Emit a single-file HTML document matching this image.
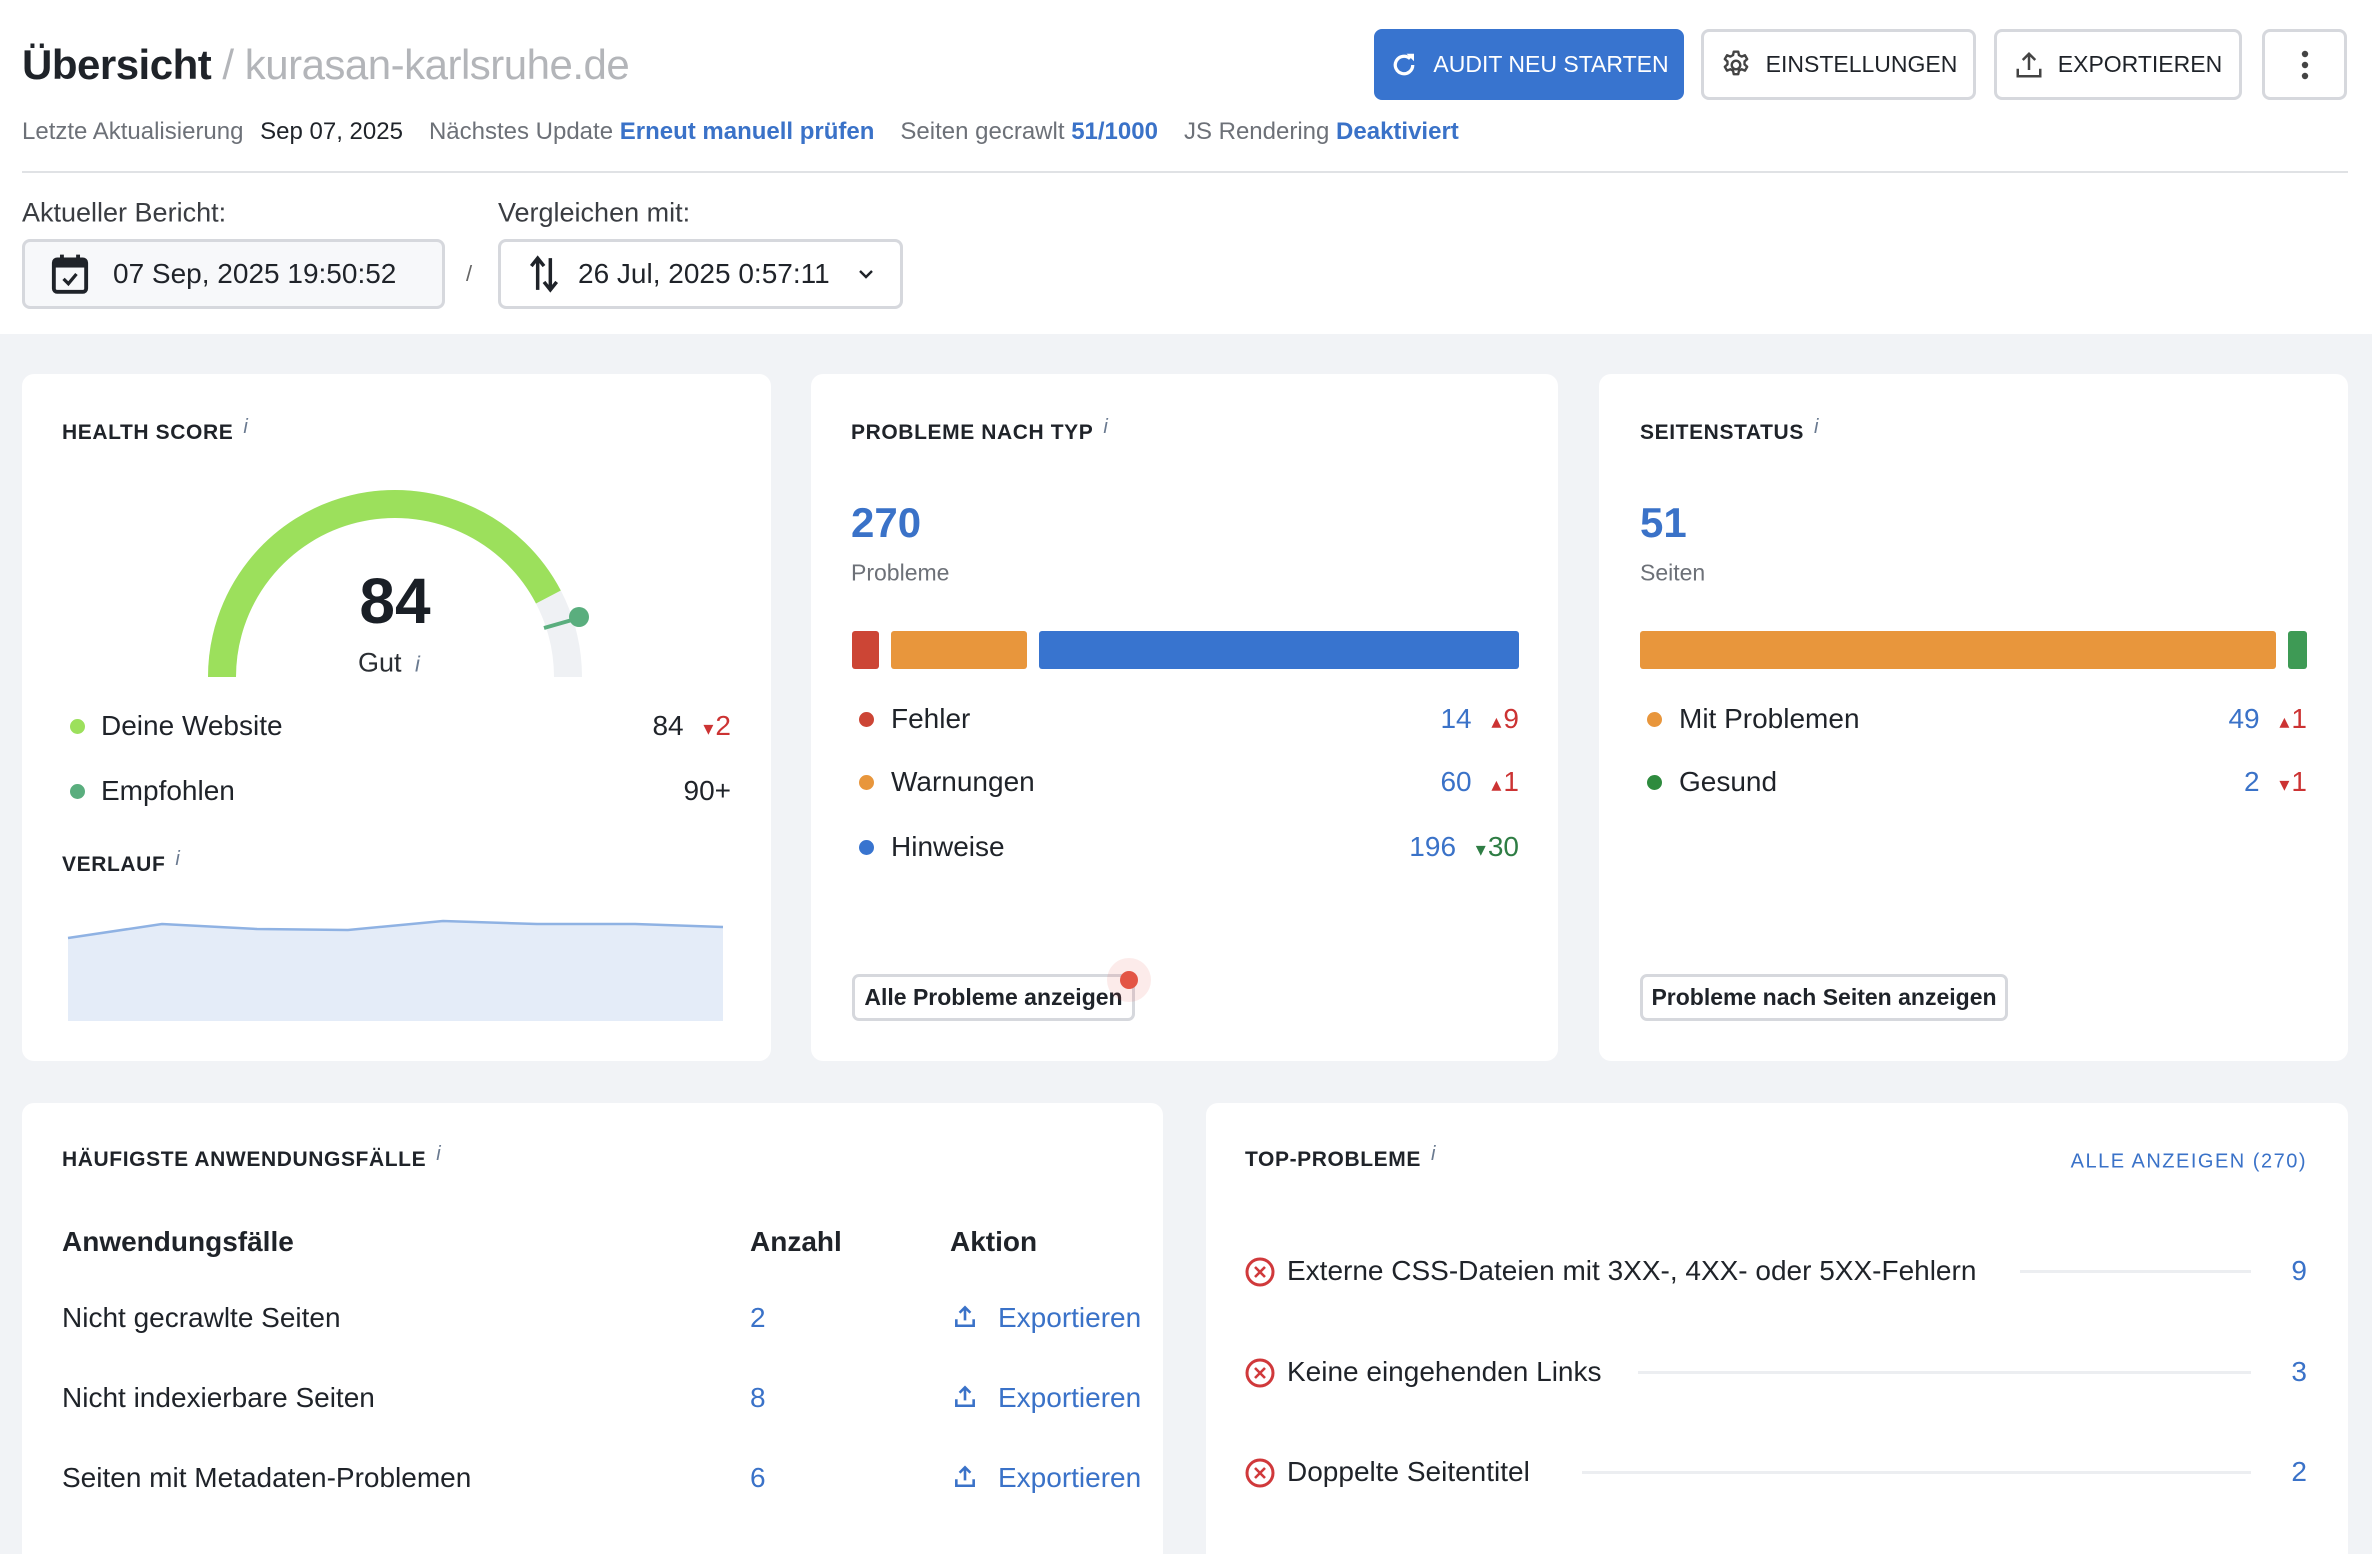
<!DOCTYPE html>
<html><head><meta charset="utf-8">
<style>
*{box-sizing:border-box;margin:0;padding:0}
html,body{width:2372px;height:1554px;overflow:hidden}
body{background:#fff;font-family:"Liberation Sans",sans-serif;color:#1f2329;position:relative}
.a{position:absolute;white-space:nowrap}
.vc{transform:translateY(-50%)}
.gray{background:#f1f3f6;position:absolute;left:0;top:334px;width:2372px;height:1220px}
.card{position:absolute;background:#fff;border-radius:12px}
.ttl{font-size:21px;font-weight:bold;letter-spacing:0.6px;color:#1f2329}
.ttl i{font-weight:normal;color:#6a7a90;margin-left:10px;font-size:20px;position:relative;top:-6px}
.btn{position:absolute;border:3px solid #d6d8dd;border-radius:8px;background:#fff;display:flex;align-items:center;justify-content:center;font-size:23px;color:#1f2329}
.blue{color:#3a72c8}
.dot{position:absolute;width:15px;height:15px;border-radius:50%}
.row{font-size:28px}
.ar{font-size:20px;margin-left:12px;margin-right:2px}
.sbtn{position:absolute;border:3px solid #d6d8dd;border-radius:7px;background:#fff;font-size:23px;font-weight:bold;color:#1f2329;display:flex;align-items:center;justify-content:center}
</style></head><body>

<div class="a vc" style="left:22px;top:65px;font-size:42px;font-weight:bold;letter-spacing:-0.5px">Übersicht<span style="font-weight:normal;color:#b3b5b9"> / kurasan-karlsruhe.de</span></div>
<div class="a vc" style="left:22px;top:132px;font-size:24px;color:#6d7178">Letzte Aktualisierung <span style="color:#1f2329;margin-left:10px;margin-right:26px">Sep 07, 2025</span>Nächstes Update <span class="blue" style="font-weight:bold;margin-right:26px">Erneut manuell prüfen</span>Seiten gecrawlt <span class="blue" style="font-weight:bold;margin-right:26px">51/1000</span>JS Rendering <span class="blue" style="font-weight:bold">Deaktiviert</span></div>

<div class="btn" style="left:1374px;top:29px;width:310px;height:71px;background:#3874cf;border-color:#3874cf;color:#fff">
<svg width="30" height="30" viewBox="0 0 24 24" style="margin-right:14px"><path d="M19 12a7 7 0 1 1-2.1-5" fill="none" stroke="#fff" stroke-width="2.6"/><path d="M14 3h6v6z" fill="#fff"/></svg>AUDIT NEU STARTEN</div>
<div class="btn" style="left:1701px;top:29px;width:275px;height:71px">
<svg width="32" height="32" viewBox="0 0 24 24" style="margin-right:14px"><circle cx="12" cy="12" r="3.2" fill="none" stroke="#444" stroke-width="1.8"/><path d="M10.3 2h3.4l.5 2.6 2 1.1 2.5-1 1.7 2.9-2 1.7v2.3l2 1.7-1.7 2.9-2.5-1-2 1.1-.5 2.6h-3.4l-.5-2.6-2-1.1-2.5 1-1.7-2.9 2-1.7V9.3l-2-1.7 1.7-2.9 2.5 1 2-1.1z" fill="none" stroke="#444" stroke-width="1.8" stroke-linejoin="round"/></svg>EINSTELLUNGEN</div>
<div class="btn" style="left:1994px;top:29px;width:248px;height:71px">
<svg width="30" height="30" viewBox="0 0 24 24" style="margin-right:14px"><path d="M12 16V3M7 8l5-5 5 5M3 15v6h18v-6" fill="none" stroke="#444" stroke-width="2"/></svg>EXPORTIEREN</div>
<div class="btn" style="left:2262px;top:29px;width:85px;height:71px">
<svg width="10" height="30" viewBox="0 0 10 30"><circle cx="5" cy="4" r="3.2" fill="#444"/><circle cx="5" cy="15" r="3.2" fill="#444"/><circle cx="5" cy="26" r="3.2" fill="#444"/></svg></div>

<div class="a" style="left:22px;top:171px;width:2326px;height:2px;background:#e0e2e5"></div>

<div class="a vc" style="left:22px;top:213px;font-size:27px;color:#3a3d42">Aktueller Bericht:</div>
<div class="a vc" style="left:498px;top:213px;font-size:27px;color:#3a3d42">Vergleichen mit:</div>
<div class="a" style="left:22px;top:239px;width:423px;height:70px;border:3px solid #d6d8dd;border-radius:8px;background:#f7f8fa"></div>
<svg class="a" style="left:50px;top:253px" width="40" height="42" viewBox="0 0 24 26"><rect x="2" y="4" width="20" height="20" rx="2" fill="none" stroke="#1f2329" stroke-width="2.4"/><rect x="2" y="4" width="20" height="5" fill="#1f2329"/><path d="M7 1v5M17 1v5" stroke="#1f2329" stroke-width="2.4"/><path d="M8 16l3 3 5-6" fill="none" stroke="#1f2329" stroke-width="2"/></svg>
<div class="a vc" style="left:113px;top:274px;font-size:28px">07 Sep, 2025 19:50:52</div>
<div class="a vc" style="left:466px;top:274px;font-size:22px;color:#666">/</div>
<div class="a" style="left:498px;top:239px;width:405px;height:70px;border:3px solid #d6d8dd;border-radius:8px;background:#fff"></div>
<svg class="a" style="left:528px;top:255px" width="32" height="38" viewBox="0 0 20 24"><path d="M6 22V3M2 7l4-5 4 5M14 2v19M10 17l4 5 4-5" fill="none" stroke="#1f2329" stroke-width="2.2"/></svg>
<div class="a vc" style="left:578px;top:274px;font-size:28px">26 Jul, 2025 0:57:11</div>
<svg class="a" style="left:857px;top:267px" width="18" height="14" viewBox="0 0 18 14"><path d="M3 4l6 6 6-6" fill="none" stroke="#1f2329" stroke-width="2.4"/></svg>

<div class="gray"></div>

<!-- Card 1 -->
<div class="card" style="left:22px;top:374px;width:749px;height:687px"></div>
<div class="a vc ttl" style="left:62px;top:433px">HEALTH SCORE<i>i</i></div>
<svg class="a" style="left:195px;top:480px" width="400" height="200" viewBox="0 0 400 200">
<path d="M27 197 A173 173 0 0 1 373 197" fill="none" stroke="#eff1f4" stroke-width="28"/>
<path d="M27 197 A173 173 0 0 1 353.4 117" fill="none" stroke="#9ce05c" stroke-width="28"/>
<path d="M349 148 L384 138" stroke="#5aae7e" stroke-width="4"/>
<circle cx="384" cy="137" r="10" fill="#5aae7e"/>
</svg>
<div class="a" style="left:295px;top:601px;width:200px;text-align:center;transform:translateY(-50%);font-size:64px;font-weight:bold;color:#1a1f26">84</div>
<div class="a vc" style="left:358px;top:663px;font-size:27px;color:#2a2e33">Gut <i style="color:#6a7a90;font-size:22px;margin-left:6px">i</i></div>
<div class="dot" style="left:70px;top:719px;background:#9ce05c"></div>
<div class="a vc row" style="left:101px;top:726px">Deine Website</div>
<div class="a vc row" style="right:1641px;top:726px">84 <span class="ar" style="color:#cc3333">▾</span><span style="color:#cc3333">2</span></div>
<div class="dot" style="left:70px;top:784px;background:#5aae7e"></div>
<div class="a vc row" style="left:101px;top:791px">Empfohlen</div>
<div class="a vc row" style="right:1641px;top:791px">90+</div>
<div class="a vc ttl" style="left:62px;top:865px">VERLAUF<i>i</i></div>
<svg class="a" style="left:0;top:0" width="800" height="1100"><path d="M68 938 L162 924 L257 929 L348 930 L443 921 L537 924 L635 924 L723 927 L723 1021 L68 1021Z" fill="#e4ecf8"/><path d="M68 938 L162 924 L257 929 L348 930 L443 921 L537 924 L635 924 L723 927" fill="none" stroke="#8fb2e3" stroke-width="2.5"/></svg>

<!-- Card 2 -->
<div class="card" style="left:811px;top:374px;width:747px;height:687px"></div>
<div class="a vc ttl" style="left:851px;top:433px">PROBLEME NACH TYP<i>i</i></div>
<div class="a vc blue" style="left:851px;top:523px;font-size:42px;font-weight:bold">270</div>
<div class="a vc" style="left:851px;top:573px;font-size:23px;color:#6d7178">Probleme</div>
<div class="a" style="left:852px;top:631px;width:27px;height:38px;background:#cc4535;border-radius:3px"></div>
<div class="a" style="left:891px;top:631px;width:136px;height:38px;background:#e8963c;border-radius:3px"></div>
<div class="a" style="left:1039px;top:631px;width:480px;height:38px;background:#3874cf;border-radius:3px"></div>
<div class="dot" style="left:859px;top:712px;background:#cc4535"></div>
<div class="a vc row" style="left:891px;top:719px">Fehler</div>
<div class="a vc row" style="right:853px;top:719px"><span class="blue">14</span> <span class="ar" style="color:#cc3333">▴</span><span style="color:#cc3333">9</span></div>
<div class="dot" style="left:859px;top:775px;background:#e8963c"></div>
<div class="a vc row" style="left:891px;top:782px">Warnungen</div>
<div class="a vc row" style="right:853px;top:782px"><span class="blue">60</span> <span class="ar" style="color:#cc3333">▴</span><span style="color:#cc3333">1</span></div>
<div class="dot" style="left:859px;top:840px;background:#3874cf"></div>
<div class="a vc row" style="left:891px;top:847px">Hinweise</div>
<div class="a vc row" style="right:853px;top:847px"><span class="blue">196</span> <span class="ar" style="color:#2e7d44">▾</span><span style="color:#2e7d44">30</span></div>
<div class="sbtn" style="left:852px;top:974px;width:283px;height:47px">Alle Probleme anzeigen</div>
<div class="a" style="left:1107px;top:958px;width:44px;height:44px;border-radius:50%;background:rgba(230,90,80,0.12)"></div>
<div class="a" style="left:1120px;top:971px;width:18px;height:18px;border-radius:50%;background:#e35545"></div>

<!-- Card 3 -->
<div class="card" style="left:1599px;top:374px;width:749px;height:687px"></div>
<div class="a vc ttl" style="left:1640px;top:433px">SEITENSTATUS<i>i</i></div>
<div class="a vc blue" style="left:1640px;top:523px;font-size:42px;font-weight:bold">51</div>
<div class="a vc" style="left:1640px;top:573px;font-size:23px;color:#6d7178">Seiten</div>
<div class="a" style="left:1640px;top:631px;width:636px;height:38px;background:#e8963c;border-radius:3px"></div>
<div class="a" style="left:2288px;top:631px;width:19px;height:38px;background:#3e9a55;border-radius:3px"></div>
<div class="dot" style="left:1647px;top:712px;background:#e8963c"></div>
<div class="a vc row" style="left:1679px;top:719px">Mit Problemen</div>
<div class="a vc row" style="right:65px;top:719px"><span class="blue">49</span> <span class="ar" style="color:#cc3333">▴</span><span style="color:#cc3333">1</span></div>
<div class="dot" style="left:1647px;top:775px;background:#2e8b3e"></div>
<div class="a vc row" style="left:1679px;top:782px">Gesund</div>
<div class="a vc row" style="right:65px;top:782px"><span class="blue">2</span> <span class="ar" style="color:#cc3333">▾</span><span style="color:#cc3333">1</span></div>
<div class="sbtn" style="left:1640px;top:974px;width:368px;height:47px">Probleme nach Seiten anzeigen</div>

<!-- Card 4 -->
<div class="card" style="left:22px;top:1103px;width:1141px;height:500px"></div>
<div class="a vc ttl" style="left:62px;top:1160px">HÄUFIGSTE ANWENDUNGSFÄLLE<i>i</i></div>
<div class="a vc row" style="left:62px;top:1242px;font-weight:bold">Anwendungsfälle</div>
<div class="a vc row" style="left:750px;top:1242px;font-weight:bold">Anzahl</div>
<div class="a vc row" style="left:950px;top:1242px;font-weight:bold">Aktion</div>

<div class="a vc row" style="left:62px;top:1318px">Nicht gecrawlte Seiten</div>
<div class="a vc row blue" style="left:750px;top:1318px">2</div>
<div class="a vc row blue" style="left:952px;top:1318px"><svg width="26" height="28" viewBox="0 0 24 24" style="vertical-align:-3px;margin-right:20px"><path d="M12 16V4M7 9l5-5 5 5M4 15v6h16v-6" fill="none" stroke="#3a72c8" stroke-width="2.4"/></svg>Exportieren</div>

<div class="a vc row" style="left:62px;top:1398px">Nicht indexierbare Seiten</div>
<div class="a vc row blue" style="left:750px;top:1398px">8</div>
<div class="a vc row blue" style="left:952px;top:1398px"><svg width="26" height="28" viewBox="0 0 24 24" style="vertical-align:-3px;margin-right:20px"><path d="M12 16V4M7 9l5-5 5 5M4 15v6h16v-6" fill="none" stroke="#3a72c8" stroke-width="2.4"/></svg>Exportieren</div>

<div class="a vc row" style="left:62px;top:1478px">Seiten mit Metadaten-Problemen</div>
<div class="a vc row blue" style="left:750px;top:1478px">6</div>
<div class="a vc row blue" style="left:952px;top:1478px"><svg width="26" height="28" viewBox="0 0 24 24" style="vertical-align:-3px;margin-right:20px"><path d="M12 16V4M7 9l5-5 5 5M4 15v6h16v-6" fill="none" stroke="#3a72c8" stroke-width="2.4"/></svg>Exportieren</div>

<div class="a vc row" style="left:62px;top:1570px">Links zu problematischen Seiten</div>
<div class="a vc row blue" style="left:750px;top:1570px">9</div>
<div class="a vc row" style="left:952px;top:1570px;color:#b9bcc2">⇧ Exportieren</div>

<!-- Card 5 -->
<div class="card" style="left:1206px;top:1103px;width:1142px;height:500px"></div>
<div class="a vc ttl" style="left:1245px;top:1160px">TOP-PROBLEME<i>i</i></div>
<div class="a vc blue" style="right:65px;top:1162px;font-size:20px;letter-spacing:1.5px">ALLE ANZEIGEN (270)</div>

<svg class="a" style="left:1244px;top:1256px" width="32" height="32" viewBox="0 0 32 32"><circle cx="16" cy="16" r="13" fill="none" stroke="#d0393b" stroke-width="3"/><path d="M11 11l10 10M21 11l-10 10" stroke="#d0393b" stroke-width="2.6"/></svg>
<div class="a vc row" style="left:1287px;top:1271px">Externe CSS-Dateien mit 3XX-, 4XX- oder 5XX-Fehlern</div>
<div class="a" style="left:2020px;top:1270px;width:231px;height:3px;background:#eceef1"></div>
<div class="a vc row blue" style="right:65px;top:1271px">9</div>

<svg class="a" style="left:1244px;top:1357px" width="32" height="32" viewBox="0 0 32 32"><circle cx="16" cy="16" r="13" fill="none" stroke="#d0393b" stroke-width="3"/><path d="M11 11l10 10M21 11l-10 10" stroke="#d0393b" stroke-width="2.6"/></svg>
<div class="a vc row" style="left:1287px;top:1372px">Keine eingehenden Links</div>
<div class="a" style="left:1638px;top:1371px;width:613px;height:3px;background:#eceef1"></div>
<div class="a vc row blue" style="right:65px;top:1372px">3</div>

<svg class="a" style="left:1244px;top:1457px" width="32" height="32" viewBox="0 0 32 32"><circle cx="16" cy="16" r="13" fill="none" stroke="#d0393b" stroke-width="3"/><path d="M11 11l10 10M21 11l-10 10" stroke="#d0393b" stroke-width="2.6"/></svg>
<div class="a vc row" style="left:1287px;top:1472px">Doppelte Seitentitel</div>
<div class="a" style="left:1582px;top:1471px;width:669px;height:3px;background:#eceef1"></div>
<div class="a vc row blue" style="right:65px;top:1472px">2</div>

</body></html>
